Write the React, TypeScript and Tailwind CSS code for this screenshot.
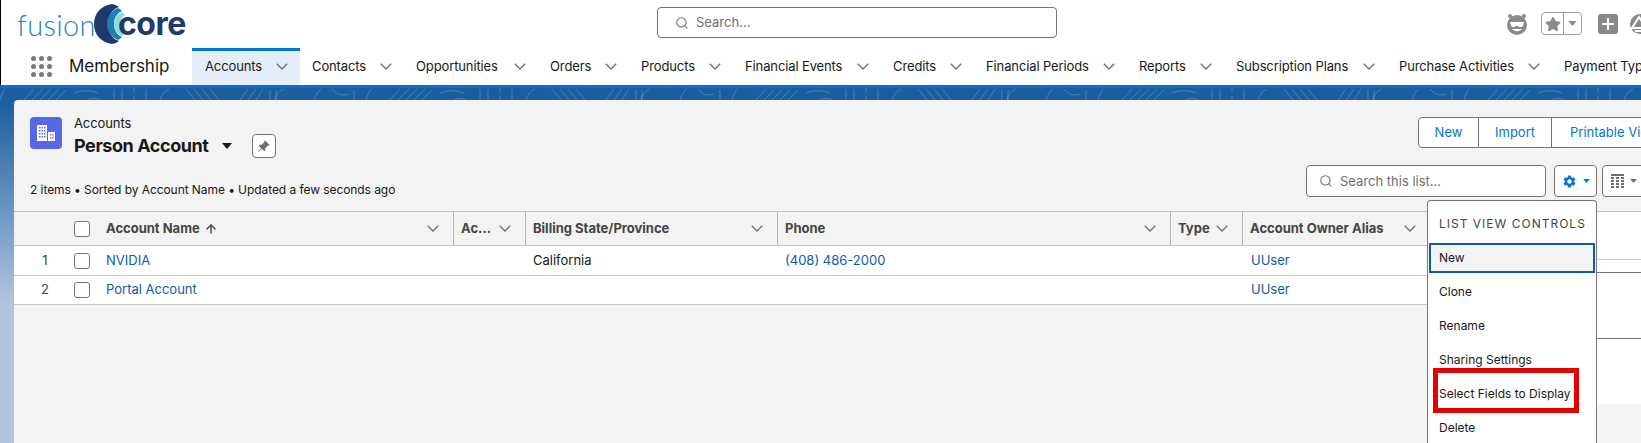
import { ArrowUp, Search } from "lucide-react";
import { BsPinAngleFill } from "react-icons/bs";
import { FaStar } from "react-icons/fa";
import { MdSettings } from "react-icons/md";

const navItems = [
  { label: "Accounts", width: 108, active: true },
  { label: "Contacts", width: 104 },
  { label: "Opportunities", width: 134 },
  { label: "Orders", width: 91 },
  { label: "Products", width: 104 },
  { label: "Financial Events", width: 148 },
  { label: "Credits", width: 93 },
  { label: "Financial Periods", width: 153 },
  { label: "Reports", width: 97 },
  { label: "Subscription Plans", width: 163 },
  { label: "Purchase Activities", width: 165 },
  { label: "Payment Types", width: 165 },
];

const rows = [
  { n: 1, name: "NVIDIA", state: "California", phone: "(408) 486-2000", h: "h-[30px]" },
  { n: 2, name: "Portal Account", state: "", phone: "", h: "h-[29px]" },
];

const cols = "grid grid-cols-[60px_24px_355px_72px_252px_393px_72px_188px_1fr]";

function Chevron({ className = "" }: { className?: string }) {
  return (
    <svg viewBox="0 0 12 7" className={`h-[7px] w-3 ${className}`} fill="none" stroke="currentColor" strokeWidth="1.3">
      <path d="M.8.8 6 6 11.2.8" />
    </svg>
  );
}

function Caret({ className = "" }: { className?: string }) {
  return (
    <svg viewBox="0 0 10 6" className={className} fill="currentColor">
      <path d="M0 0h10L5 6z" />
    </svg>
  );
}

function Logo() {
  return (
    <div className="flex h-[48px] w-[657px] shrink-0 items-center pl-[17px]">
      <span className="w-[76px] font-['Lato',sans-serif] text-[29px] leading-none font-light tracking-[0.35px] text-[#2288bb]">fusion</span>
      <svg viewBox="0 0 36 42" className="h-[42px] w-[36px]">
        <path d="M19 1C7 3 1 11 1 21s6 18 18 20c3-.5 5-1.500 7-3-7-2-11-9-11-17s4-15 11-17c-2-1.500-4-2.500-7-3z" fill="#1f3a6b" />
        <path d="M25 5c-7 3-11 9-11 16s4 13 11 16c2-1 3-2 4-3-5-2-8-7-8-13s3-11 8-13c-1-1-2-2-4-3z" fill="#1f7db8" />
        <path d="M29 9c-5 2-8 7-8 12s3 10 8 12c1-1 2-2 3-3-3-2-5-5-5-9s2-7 5-9c-1-1-2-2-3-3z" fill="#8fdcd6" />
      </svg>
      <span className="ml-[-11px] font-['Inter',sans-serif] text-[32px] leading-none font-bold tracking-[-0.5px] text-[#1f3a6b]">core</span>
    </div>
  );
}

function TopIcons() {
  return (
    <div className="ml-[449px] flex shrink-0 items-center pt-[12px] text-[#8a8a8a]">
      <svg viewBox="0 0 22 22" className="h-[22px] w-[22px]">
        <circle cx="4" cy="3" r="2" fill="#8a8a8a" />
        <circle cx="18" cy="3" r="2" fill="#8a8a8a" />
        <circle cx="11" cy="12" r="10" fill="#8a8a8a" />
        <path d="M4 9h14l-1 4c-1 1.500-4 1.500-5 0h-2c-1 1.500-4 1.500-5 0z" fill="#fff" />
        <path d="M6 16c3 3 7 3 10 0z" fill="#fff" />
      </svg>
      <div className="ml-[13px] flex h-[23px] w-[41px] items-center rounded-[4px] border border-[#a0a0a0]">
        <div className="flex h-full w-[22px] items-center justify-center border-r border-[#a0a0a0]">
          <FaStar className="h-4 w-4" />
        </div>
        <Caret className="ml-[4px] h-[5px] w-[9px]" />
      </div>
      <div className="ml-[16px] flex h-[20px] w-[20px] items-center justify-center rounded-[3px] bg-[#8a8a8a]">
        <svg viewBox="0 0 12 12" className="h-3 w-3" stroke="#fff" strokeWidth="2">
          <path d="M6 0v12M0 6h12" />
        </svg>
      </div>
      <svg viewBox="0 0 22 22" className="ml-[11px] h-[22px] w-[22px] shrink-0">
        <circle cx="11" cy="11" r="10" fill="#8a8a8a" />
        <path d="M10 4 3 15h14z" fill="none" stroke="#fff" strokeWidth="2" />
        <path d="M6 18h10" stroke="#fff" strokeWidth="2" />
      </svg>
    </div>
  );
}

function NavBar() {
  return (
    <nav className="flex h-[37px] items-stretch text-[13px] tracking-[-0.12px] text-[#181818]">
      <div className="flex w-[192px] shrink-0 items-center pl-[31px]">
        <div className="grid w-[21px] grid-cols-3 gap-[3px]">
          {Array.from({ length: 9 }).map((_, i) => (
            <span key={i} className="h-[5px] w-[5px] rounded-full bg-[#7a7a7a]" />
          ))}
        </div>
        <span className="ml-[17px] text-[17px] tracking-[0px]">Membership</span>
      </div>
      {navItems.map((item) => (
        <div
          key={item.label}
          style={{ width: item.width }}
          className={`flex shrink-0 items-center justify-between pr-[12px] ${
            item.active ? "bg-[#e5eef8] pl-[13px] shadow-[inset_0_3px_0_#0176d3]" : "pl-[12px]"
          }`}
        >
          <span className="whitespace-nowrap">{item.label}</span>
          <Chevron className="text-[#706e6b]" />
        </div>
      ))}
    </nav>
  );
}

function BandPattern() {
  return (
    <svg className="absolute top-0 left-0 h-[12px] w-full" aria-hidden="true">
      <defs>
        <pattern id="contours" width="366" height="12" patternUnits="userSpaceOnUse" x="14">
          <g fill="none" stroke="#ffffff" strokeOpacity="0.2" strokeWidth="1">
            <path d="M10 12 20 1M18 12 29 1M26 12 37 1M34 12 45 1M42 12 52 2" />
            <path d="M60 5c8-3 16-3 24 0M74 12c4-2 8-2 12 0" />
            <path d="M100 1v10M108 1v11M120 0v5M120 8v4M132 1v11" />
            <path d="M146 12c2-5 4-9 9-11M172 1l9 11M180 1l9 11M188 1l9 11M196 1l9 11" />
            <path d="M226 12l8-11M234 12l8-11M242 12l7-11M256 12V2M262 12V2M270 1c-5 2-8 6-9 11" />
            <path d="M300 12c2-5 3-8 7-11M318 1c5 6 10 7 16 5M340 2v10M352 12c1-5 3-8 5-11" />
          </g>
        </pattern>
      </defs>
      <rect width="100%" height="12" fill="url(#contours)" />
    </svg>
  );
}

function PageHeading() {
  return (
    <div className="flex h-[111px] justify-between">
      <div className="flex flex-col justify-between pt-[17px] pb-[13px] pl-4">
        <div className="flex">
          <div className="flex h-8 w-8 items-center justify-center rounded-[4px] bg-[#5867e8]">
            <svg viewBox="0 0 20 20" className="h-5 w-5" fill="#fff">
              <path d="M1 2h10v16H1z" />
              <path d="M12 9h7v9h-7z" />
              <g fill="#5867e8">
                <path d="M3 4h1.500v1.500H3zM5.500 4H7v1.500H5.500zM8 4h1.500v1.500H8zM3 7h1.500v1.500H3zM5.500 7H7v1.500H5.500zM8 7h1.500v1.500H8zM3 10h1.500v1.500H3zM5.500 10H7v1.500H5.500zM8 10h1.500v1.500H8zM3 13h1.500v1.500H3zM5.500 13H7v1.500H5.500zM8 13h1.500v1.500H8z" />
                <path d="M14 11h1.200v1.500H14zM16.300 11h1.200v1.500h-1.200zM14 14h1.200v1.500H14zM16.300 14h1.200v1.500h-1.200z" />
              </g>
            </svg>
          </div>
          <div className="ml-[12px]">
            <div className="mt-[-2px] text-[13px] leading-4 tracking-[-0.1px] text-[#181818]">Accounts</div>
            <div className="mt-[3px] flex items-center">
              <span className="text-[18px] leading-6 font-bold tracking-[-0.42px] text-[#181818]">Person Account</span>
              <Caret className="ml-[13px] h-[6px] w-[10px] text-[#181818]" />
              <div className="ml-5 flex h-6 w-6 items-center justify-center rounded-[4px] border border-[#747474] bg-white">
                <BsPinAngleFill className="h-[13px] w-[13px] text-[#706e6b]" />
              </div>
            </div>
          </div>
        </div>
        <div className="text-[12px] leading-4 tracking-[-0.07px] text-[#181818]">2 items • Sorted by Account Name • Updated a few seconds ago</div>
      </div>

      <div className="w-[335px] shrink-0 overflow-hidden pt-[17px]">
        <div className="ml-[112px] flex h-[31px] w-[300px] text-[13px] text-[#0176d3]">
          <div className="flex w-[61px] items-center justify-center rounded-l-[4px] border border-[#747474] bg-white pt-px">New</div>
          <div className="flex w-[73px] items-center justify-center border-y border-r border-[#747474] bg-white pt-px">Import</div>
          <div className="flex flex-1 items-center border-y border-r border-[#747474] bg-white pt-px pl-[18px]">Printable View</div>
        </div>
        <div className="mt-[17px] flex h-8 w-[345px]">
          <div className="flex w-[240px] items-center rounded-[4px] border border-[#747474] bg-white pl-[12px] text-[13px] text-[#706e6b]">
            <Search className="h-[14px] w-[14px] text-[#706e6b]" strokeWidth={1.8} />
            <span className="ml-[7px] pt-px">Search this list...</span>
          </div>
          <div className="ml-[8px] flex w-[43px] items-center justify-center gap-[6px] rounded-[4px] border border-[#747474] bg-white text-[#0176d3]">
            <MdSettings className="h-[15px] w-[15px]" />
            <Caret className="h-1 w-[7px]" />
          </div>
          <div className="ml-[5px] flex w-[43px] items-center justify-center gap-[6px] rounded-[4px] border border-[#747474] bg-white text-[#706e6b]">
            <svg viewBox="0 0 13 14" className="h-[14px] w-[13px]" fill="currentColor">
              <path d="M0 0h13v2H0zM0 3h3v2H0zM5 3h3v2H5zM10 3h3v2h-3zM0 6h3v2H0zM5 6h3v2H5zM10 6h3v2h-3zM0 9h3v2H0zM5 9h3v2H5zM10 9h3v2h-3zM0 12h3v2H0zM5 12h3v2H5zM10 12h3v2h-3z" />
            </svg>
            <Caret className="h-1 w-[7px]" />
          </div>
        </div>
      </div>
    </div>
  );
}

function HeaderCell({ label, sorted, divider = true }: { label: string; sorted?: boolean; divider?: boolean }) {
  return (
    <div className={`flex items-center justify-between pr-[14px] ${divider ? "border-l border-[#b5b5b5] pl-[7px]" : "pl-2"}`}>
      <span className="flex items-center gap-[4px] whitespace-nowrap">
        {label}
        {sorted && <ArrowUp className="h-[14px] w-[14px]" strokeWidth={2.4} />}
      </span>
      <Chevron className="text-[#706e6b]" />
    </div>
  );
}

function Checkbox() {
  return <span className="h-4 w-4 rounded-[3px] border border-[#747474] bg-white" />;
}

function ListTable() {
  return (
    <div className="text-[13px]">
      <div className={`${cols} h-[35px] border-y border-[#c4c4c4] font-bold text-[#444444]`}>
        <div />
        <div className="flex items-center">
          <Checkbox />
        </div>
        <HeaderCell label="Account Name" sorted divider={false} />
        <HeaderCell label="Ac..." />
        <HeaderCell label="Billing State/Province" />
        <HeaderCell label="Phone" />
        <HeaderCell label="Type" />
        <HeaderCell label="Account Owner Alias" />
      </div>
      {rows.map((row) => (
        <div key={row.n} className={`${cols} ${row.h} border-b border-[#c9c9c9] bg-white text-[#181818]`}>
          <div className="flex items-center justify-center pl-[2px] text-[#444444]">{row.n}</div>
          <div className="flex items-center">
            <Checkbox />
          </div>
          <div className="flex items-center pl-2 text-[#0b5cab]">{row.name}</div>
          <div />
          <div className="flex items-center pl-2">{row.state}</div>
          <div className="flex items-center pl-2 text-[#0b5cab]">{row.phone}</div>
          <div />
          <div className="flex items-center pl-[9px] text-[#0b5cab]">UUser</div>
        </div>
      ))}
    </div>
  );
}

function ControlsMenu() {
  return (
    <div className="absolute top-[100px] right-[44px] bottom-0 z-10 w-[170px] rounded-t-[4px] border border-b-0 border-[#747474] bg-white text-[12px] text-[#181818]">
      <div className="flex h-[40px] items-center pt-[6px] pl-[11px] tracking-[1px] text-[#444444]">LIST VIEW CONTROLS</div>
      <div className="mx-px flex h-[34px] items-center">
        <div className="flex h-[30px] w-full items-center border-2 border-[#0b5cab] bg-[#f3f3f3] pl-2">New</div>
      </div>
      {["Clone", "Rename", "Sharing Settings", "Select Fields to Display", "Delete"].map((item) => (
        <div key={item} className="flex h-[34px] items-center pl-[11px] whitespace-nowrap">
          {item}
        </div>
      ))}
      <div className="absolute top-[167px] left-[5px] h-[45px] w-[146px] border-[5px] border-[#e60000]" />
    </div>
  );
}

export default function App() {
  return (
    <div className="flex h-[443px] w-[1641px] flex-col overflow-hidden bg-white font-['Inter','Liberation_Sans',sans-serif]">
      <header className="shrink-0 shadow-[inset_1px_0_0_#000]">
        <div className="flex h-[48px] items-start">
          <Logo />
          <div className="mt-[7px] flex h-[31px] w-[400px] shrink-0 items-center rounded-[4px] border border-[#747474] pl-[17px] text-[13px] text-[#706e6b]">
            <Search className="h-[14px] w-[14px]" strokeWidth={1.8} />
            <span className="ml-[7px]">Search...</span>
          </div>
          <TopIcons />
        </div>
        <NavBar />
      </header>
      <main className="relative flex min-h-0 flex-1 border-t-[3px] border-[#0a6ccb] bg-[linear-gradient(180deg,#1b5e9e_0%,#1b5e9e_4%,#b0c4de_60%)] pt-[12px] pl-[14px]">
        <BandPattern />
        <section className="relative min-w-0 flex-1 overflow-hidden rounded-tl-[4px] bg-[#f3f3f3]">
          <PageHeading />
          <ListTable />
          <div className="absolute top-[112px] right-0 h-[192px] w-[44px] bg-white">
            <div className="h-[48px] border-b border-[#c9c9c9]" />
            <div className="h-[13px] border-b border-[#747474]" />
            <div className="h-[66px] border-b border-[#747474]" />
          </div>
          <ControlsMenu />
        </section>
      </main>
    </div>
  );
}
